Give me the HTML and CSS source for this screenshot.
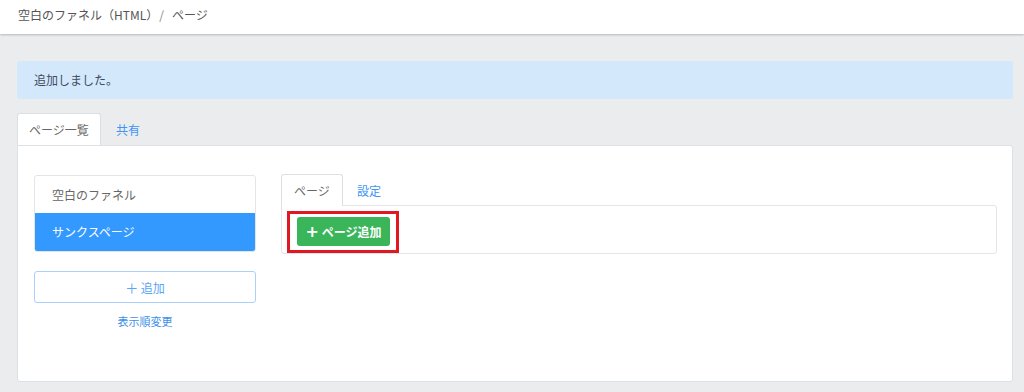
FILE: index.html
```html
<!DOCTYPE html>
<html lang="ja">
<head>
  <meta charset="UTF-8" />
  <title>ページ</title>
  <link rel="stylesheet" href="styles.css">
</head>
<body>
  <header class="topbar">
    <span class="crumb">空白のファネル（HTML）</span>
    <span class="crumb-sep">/</span>
    <span class="crumb">ページ</span>
  </header>

  <main class="main">
    <div class="alert">追加しました。</div>

    <nav class="tabs">
      <span class="tab active">ページ一覧</span>
      <span class="tab">共有</span>
    </nav>

    <section class="panel">
      <div class="side">
        <ul class="page-list">
          <li class="page-item">空白のファネル</li>
          <li class="page-item selected">サンクスページ</li>
        </ul>
        <button class="add-btn"><span class="plus">＋</span> 追加</button>
        <a class="sort-link" href="#">表示順変更</a>
      </div>

      <div class="content">
        <nav class="tabs sub">
          <span class="tab active">ページ</span>
          <span class="tab">設定</span>
        </nav>
        <div class="content-box">
          <div class="highlight">
            <button class="green-btn"><span class="green-plus">+</span> ページ追加</button>
          </div>
        </div>
      </div>
    </section>
  </main>
</body>
</html>
```

FILE: styles.css
```css
body { margin: 0; background: #ebecee; font-family: "Noto Sans CJK JP", "Noto Sans", sans-serif; font-size: 12px; color: #555; }
.topbar { height: 34px; background: #fff; box-shadow: 0 1px 2px rgba(0,0,0,0.22); padding: 0 18px 6px; display: flex; align-items: center; gap: 5px; box-sizing: border-box; }
.crumb { color: #555; }
.crumb-sep { color: #888; margin: 0 3px 0 -4px; }
.main { padding: 27px 11px 10px 17px; }
.alert { background: #d4e8fc; color: #3d4b5c; border-radius: 3px; height: 38px; line-height: 38px; padding: 0 17px; }
.tabs { display: flex; margin-top: 14px; }
.tab { height: 32px; line-height: 32px; padding: 0 12px; color: #3d95f5; border: 1px solid transparent; border-bottom: none; border-radius: 3px 3px 0 0; box-sizing: border-box; }
.tab.active { background: #fff; color: #666; border-color: #dcdfe3; width: 84px; padding: 0; text-align: center; }
.tab + .tab { padding-left: 14px; }
.panel { background: #fff; border: 1px solid #dde0e4; border-radius: 0 3px 3px 3px; height: 237px; box-sizing: border-box; padding: 29px 15px 0 16px; display: flex; gap: 25px; }
.side { width: 222px; flex: none; display: flex; flex-direction: column; }
.page-list { list-style: none; margin: 0; padding: 0; border: 1px solid #e3e5e8; border-radius: 3px; overflow: hidden; }
.page-item { height: 37px; line-height: 37px; padding: 0 17px; color: #666; }
.page-item.selected { background: #3399ff; color: #fff; height: 38px; line-height: 38px; }
.add-btn { margin-top: 19px; height: 32px; background: #fff; border: 1px solid #a9d1fb; border-radius: 3px; color: #5aa5f5; font-family: inherit; font-size: 12px; }
.plus { font-size: 13px; }
.sort-link { margin-top: 10px; text-align: center; color: #3d8fe8; font-size: 11px; text-decoration: none; }
.content { flex: 1; }
.tabs.sub { margin-top: -1px; }
.tabs.sub .tab { padding: 0 13px; }
.tabs.sub .tab.active { width: 62px; padding: 0; }
.content-box { border: 1px solid #e3e5e8; border-radius: 0 3px 3px 3px; height: 49px; box-sizing: border-box; margin-top: -1px; padding: 4px 5px; }
.highlight { display: inline-block; border: 3px solid #e01822; padding: 3px 6px 3px 7px; height: 42px; box-sizing: border-box; margin-top: 1px; }
.green-btn { height: 29px; width: 93px; background: #3bb55a; color: #fff; border: none; border-radius: 3px; font-family: inherit; font-size: 12px; font-weight: bold; padding: 0; display: flex; align-items: center; justify-content: center; gap: 3px; }
.green-plus { font-size: 16px; line-height: 1; font-family: "DejaVu Sans", sans-serif; }
```
